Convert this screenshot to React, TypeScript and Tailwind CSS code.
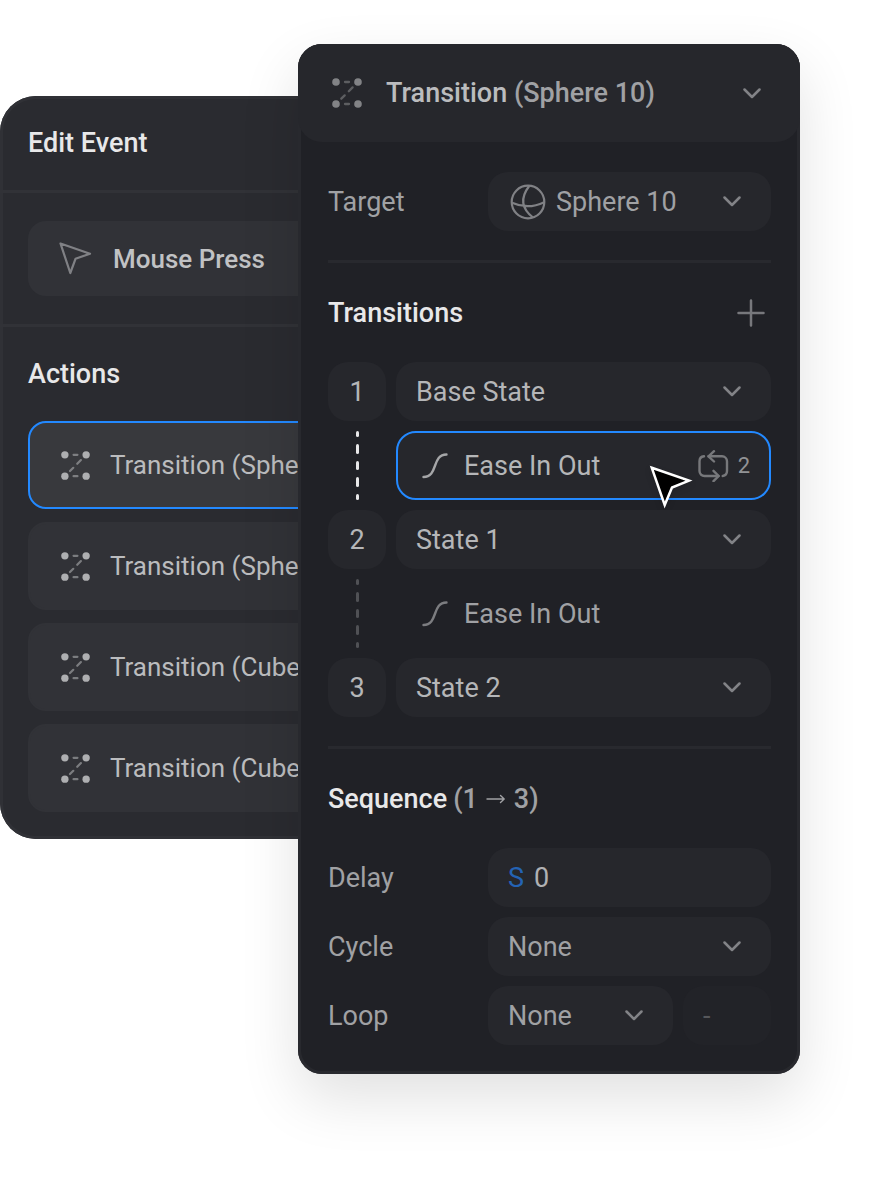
import type { ReactNode } from "react";

function TransitionIcon({ className }: { className: string }) {
  return (
    <svg viewBox="0 0 30 30" className={className} aria-hidden="true">
      <g fill="currentColor">
        <circle cx="4" cy="4" r="3.8" />
        <circle cx="26" cy="4" r="3.8" />
        <circle cx="4" cy="26" r="3.8" />
        <circle cx="26" cy="26" r="3.8" />
      </g>
      <path
        d="M13 4h4M13 26h4M9.3 20.7l3.4-3.3M16.8 13.2l3.8-3.8"
        fill="none"
        stroke="currentColor"
        strokeOpacity="0.6"
        strokeWidth="2.3"
        strokeLinecap="round"
      />
    </svg>
  );
}

function Chevron() {
  return (
    <svg viewBox="0 0 18 11" className="h-[11px] w-[18px] text-[#828387]" aria-hidden="true">
      <path d="M1.5 1.5L9 9l7.5-7.5" fill="none" stroke="currentColor" strokeWidth="2.5" strokeLinecap="round" strokeLinejoin="round" />
    </svg>
  );
}

function PointerOutline() {
  return (
    <svg viewBox="0 0 33 33" className="size-[33px] shrink-0 text-[#808185]" aria-hidden="true">
      <path d="M1.5 1.5L31 11.7L16.5 16.8L11.3 31Z" fill="none" stroke="currentColor" strokeWidth="2.2" strokeLinejoin="round" />
    </svg>
  );
}

function SphereIcon() {
  return (
    <svg viewBox="0 0 36 36" className="size-9 text-[#808185]" aria-hidden="true">
      <g fill="none" stroke="currentColor" strokeWidth="2.2">
        <circle cx="18" cy="18" r="16.3" />
        <path d="M19.2 2Q5.5 20 23 33.5M2 18.7Q18 26 34.2 18.2" />
      </g>
    </svg>
  );
}

function EaseIcon({ className }: { className: string }) {
  return (
    <svg viewBox="0 0 26 26" className={className} aria-hidden="true">
      <path d="M1.5 24C16.5 24 9.5 1.5 24.5 1.5" fill="none" stroke="currentColor" strokeWidth="2.4" strokeLinecap="round" />
    </svg>
  );
}

function RepeatIcon() {
  return (
    <svg viewBox="0 0 31 32" className="h-8 w-[31px] text-[#77787b]" aria-hidden="true">
      <g fill="none" stroke="currentColor" strokeWidth="2.4" strokeLinecap="round" strokeLinejoin="round">
        <path d="M6 6.3Q1.5 6.8 1.5 11.3V21a5 5 0 0 0 5 5H20.5" />
        <path d="M15.5 20.8l5.2 5.2-5.2 5.2M16 1.2l-5.5 5.1 5.5 5.2" />
        <path d="M10.5 6.3H24a5 5 0 0 1 5 5V21q0 4.3-4.3 5" />
      </g>
    </svg>
  );
}

function SelectField({
  id,
  label,
  options,
  icon,
}: {
  id: string;
  label?: string;
  options: string[];
  icon?: ReactNode;
}) {
  return (
    <div className="relative h-[59px] min-w-0 flex-1 rounded-[20px] bg-[#26272c]">
      {icon && <span className="pointer-events-none absolute inset-y-0 left-[22px] flex items-center">{icon}</span>}
      <select
        id={id}
        aria-label={label}
        className={`size-full appearance-none rounded-[20px] bg-transparent pr-14 outline-none ${icon ? "pl-[68px]" : "pl-5"}`}
      >
        {options.map((o) => (
          <option key={o}>{o}</option>
        ))}
      </select>
      <span className="pointer-events-none absolute inset-y-0 right-[30px] flex items-center">
        <Chevron />
      </span>
    </div>
  );
}

function StateRow({ index, state }: { index: number; state: string }) {
  return (
    <div className="flex gap-[10px] text-[#b5b6b8]">
      <span className="flex h-[59px] w-[58px] items-center justify-center rounded-[20px] bg-[#26272c]">{index}</span>
      <SelectField id={`state-${index}`} label={`State for step ${index}`} options={[state]} />
    </div>
  );
}

function Dashes({ className }: { className: string }) {
  return (
    <div className={`flex w-[58px] flex-col items-center gap-[7px] ${className}`} aria-hidden="true">
      <i className="h-[6px] w-[3px] rounded-full bg-current" />
      <i className="h-[10px] w-[3px] rounded-full bg-current" />
      <i className="h-[10px] w-[3px] rounded-full bg-current" />
      <i className="h-[10px] w-[3px] rounded-full bg-current" />
      <i className="h-[6px] w-[3px] rounded-full bg-current" />
    </div>
  );
}

function EventPanel() {
  const actions = ["Transition (Sphere 10)", "Transition (Sphere)", "Transition (Cube 1)", "Transition (Cube)"];
  return (
    <section className="-mr-24 mt-[52px] rounded-[36px] bg-[#2a2b30] pb-[27px] shadow-[inset_0_0_0_3px_#303136]">
      <h2 className="px-7 py-[31px] font-medium leading-8 text-[#e8e8e9]">Edit Event</h2>
      <hr className="h-[3px] border-0 bg-[#313237]" />
      <div className="py-7 pl-7">
        <button className="flex h-[75px] w-full items-center gap-[21px] rounded-[18px] bg-[#313237] pl-[31px] text-[26px] font-medium whitespace-nowrap text-[#c1c2c4]">
          <PointerOutline />
          Mouse Press
        </button>
      </div>
      <hr className="h-[3px] border-0 bg-[#313237]" />
      <h3 className="px-7 py-[31px] font-medium leading-8 text-[#e8e8e9]">Actions</h3>
      <ul className="flex flex-col gap-[13px] pl-7">
        {actions.map((a, i) => (
          <li key={a}>
            <button
              className={`flex h-[88px] w-full items-center gap-5 rounded-[18px] border-2 pl-[31px] text-[26px] whitespace-nowrap text-[#bbbcbe] ${
                i === 0 ? "border-[#2389ff] bg-[#38393d]" : "border-[#313237] bg-[#313237]"
              }`}
            >
              <TransitionIcon className="size-[29px] shrink-0 text-[#aeafb1]" />
              {a}
            </button>
          </li>
        ))}
      </ul>
    </section>
  );
}

function TransitionPanel() {
  return (
    <section className="relative rounded-[24px] bg-[#202126] pb-[29px] text-[#a0a1a4] shadow-[inset_0_0_0_3px_#28292e,0_24px_60px_rgba(0,0,0,0.12)]">
      <button className="flex h-[98px] w-full items-center gap-6 rounded-[24px] bg-[#26272c] pr-[39px] pl-[34px] text-left">
        <TransitionIcon className="size-[30px] text-[#828386]" />
        <span className="flex-1 font-medium">
          <span className="text-[#bbbcbe]">Transition</span> (Sphere 10)
        </span>
        <Chevron />
      </button>

      <div className="pt-[30px] pr-[29px] pl-[30px]">
        <div className="flex items-center">
          <label htmlFor="target" className="w-40">
            Target
          </label>
          <SelectField id="target" options={["Sphere 10"]} icon={<SphereIcon />} />
        </div>

        <hr className="mt-[29px] h-[3px] border-0 bg-[#28292e]" />

        <div className="flex h-[99px] items-center justify-between pr-[6px]">
          <h2 className="font-medium text-[#e8e8e9]">Transitions</h2>
          <button aria-label="Add transition">
            <svg viewBox="0 0 28 28" className="size-7 text-[#77787c]" aria-hidden="true">
              <path d="M14 1.5v25M1.5 14h25" stroke="currentColor" strokeWidth="2.5" strokeLinecap="round" />
            </svg>
          </button>
        </div>

        <div className="flex flex-col gap-[10px]">
          <StateRow index={1} state="Base State" />
          <div className="relative flex h-[69px] gap-[10px]">
            <Dashes className="text-[#e8e8e9]" />
            <button className="flex flex-1 items-center rounded-[20px] border-2 border-[#2389ff] bg-[#26272c] pr-[19px] pl-6 text-[#b5b6b8]">
              <EaseIcon className="mr-4 size-[26px] text-[#a5a6a8]" />
              <span className="flex-1 text-left">Ease In Out</span>
              <RepeatIcon />
              <span className="ml-[9px] text-[22px] text-[#929396]">2</span>
            </button>
            <svg viewBox="0 0 44 44" className="absolute top-[34px] right-[78px] size-11 drop-shadow-md" aria-hidden="true">
              <path d="M2.8 2.8L40 15.6L23 22.5L15.7 40Z" fill="#000" stroke="#fff" strokeWidth="2.5" strokeLinejoin="miter" />
            </svg>
          </div>
          <StateRow index={2} state="State 1" />
          <div className="flex h-[69px] gap-[10px]">
            <Dashes className="text-[#505155]" />
            <button className="flex flex-1 items-center pl-[26px]">
              <EaseIcon className="mr-4 size-[26px] text-[#7c7d80]" />
              Ease In Out
            </button>
          </div>
          <StateRow index={3} state="State 2" />
        </div>

        <hr className="mt-[29px] h-[3px] border-0 bg-[#28292e]" />

        <h2 className="flex h-[99px] items-center gap-[6px] font-medium">
          <span className="text-[#e8e8e9]">Sequence</span>
          <span className="flex items-center">
            (1
            <svg viewBox="0 0 20 10" className="mx-2 h-[10px] w-5" role="img" aria-label="to">
              <path d="M1 5h17M14.5 1.5L18.2 5l-3.7 3.5" fill="none" stroke="currentColor" strokeWidth="1.4" strokeLinecap="round" strokeLinejoin="round" />
            </svg>
            3)
          </span>
        </h2>

        <div className="flex flex-col gap-[10px]">
          <div className="flex items-center">
            <label htmlFor="delay" className="w-40">
              Delay
            </label>
            <div className="flex h-[59px] min-w-0 flex-1 items-center gap-[10px] rounded-[20px] bg-[#26272c] px-5">
              <span className="text-[#2463b4]">S</span>
              <input id="delay" defaultValue="0" className="w-full min-w-0 bg-transparent text-[#b0b1b3] outline-none" />
            </div>
          </div>
          <div className="flex items-center">
            <label htmlFor="cycle" className="w-40">
              Cycle
            </label>
            <SelectField id="cycle" options={["None"]} />
          </div>
          <div className="flex items-center">
            <label htmlFor="loop" className="w-40">
              Loop
            </label>
            <SelectField id="loop" options={["None"]} />
            <input
              aria-label="Loop count"
              disabled
              defaultValue="-"
              className="ml-[10px] h-[59px] w-[88px] rounded-[20px] bg-[#222328] px-5 text-[#56575b]"
            />
          </div>
        </div>
      </div>
    </section>
  );
}

export default function App() {
  return (
    <main className="grid min-h-screen grid-cols-[298fr_502fr] items-start overflow-hidden bg-white pt-11 pr-[76px] pb-[108px] font-['Roboto',sans-serif] text-[27px] leading-8">
      <EventPanel />
      <TransitionPanel />
    </main>
  );
}
